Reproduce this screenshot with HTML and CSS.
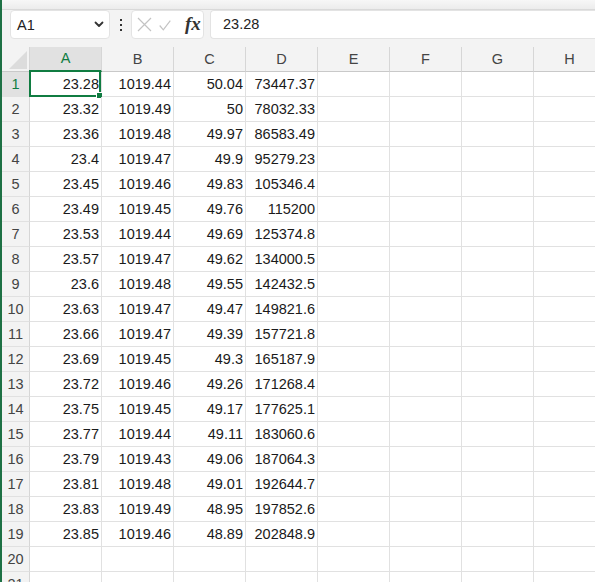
FILE: index.html
```html
<!DOCTYPE html>
<html>
<head>
<meta charset="utf-8">
<link rel="stylesheet" href="styles.css">
</head>
<body>
<div class="app">
  <div class="ribbon-edge"></div>
  <div class="fbar">
    <div class="namebox">
      <span class="name">A1</span>
      <svg class="chev" width="10" height="7" viewBox="0 0 10 7"><path d="M1.5 1.5 L5 5 L8.5 1.5" fill="none" stroke="#333" stroke-width="1.8" stroke-linecap="round" stroke-linejoin="round"/></svg>
    </div>
    <svg class="dots" width="4" height="14" viewBox="0 0 4 14"><rect x="1" y="1" width="2" height="2" fill="#333"/><rect x="1" y="6" width="2" height="2" fill="#333"/><rect x="1" y="11" width="2" height="2" fill="#333"/></svg>
    <div class="fxbox">
      <svg class="ico ix" width="15" height="15" viewBox="0 0 15 15"><path d="M1 1 L14 14 M14 1 L1 14" stroke="#c3c3c3" stroke-width="1.2" fill="none"/></svg>
      <svg class="ico ic" width="12" height="11" viewBox="0 0 12 11"><path d="M0.7 5.5 L4.3 9.8 L11.3 0.7" stroke="#c3c3c3" stroke-width="1.2" fill="none"/></svg>
      <span class="fx">fx</span>
    </div>
    <div class="input">23.28</div>
  </div>
  <div class="gap"></div>
  <div class="grid">
    <div class="corner"><svg width="27" height="24" viewBox="0 0 27 24"><polygon points="25,4 25,22 7,22" fill="#dcdcdc"/></svg></div>
    <div class="ch sel">A</div><div class="ch">B</div><div class="ch">C</div><div class="ch">D</div><div class="ch">E</div><div class="ch">F</div><div class="ch">G</div><div class="ch">H</div>

    <div class="rh sel">1</div><div class="c active">23.28<span class="selbox"><span class="handle"></span></span></div><div class="c">1019.44</div><div class="c">50.04</div><div class="c">73447.37</div><div class="c"></div><div class="c"></div><div class="c"></div><div class="c"></div>
    <div class="rh">2</div><div class="c">23.32</div><div class="c">1019.49</div><div class="c">50</div><div class="c">78032.33</div><div class="c"></div><div class="c"></div><div class="c"></div><div class="c"></div>
    <div class="rh">3</div><div class="c">23.36</div><div class="c">1019.48</div><div class="c">49.97</div><div class="c">86583.49</div><div class="c"></div><div class="c"></div><div class="c"></div><div class="c"></div>
    <div class="rh">4</div><div class="c">23.4</div><div class="c">1019.47</div><div class="c">49.9</div><div class="c">95279.23</div><div class="c"></div><div class="c"></div><div class="c"></div><div class="c"></div>
    <div class="rh">5</div><div class="c">23.45</div><div class="c">1019.46</div><div class="c">49.83</div><div class="c">105346.4</div><div class="c"></div><div class="c"></div><div class="c"></div><div class="c"></div>
    <div class="rh">6</div><div class="c">23.49</div><div class="c">1019.45</div><div class="c">49.76</div><div class="c">115200</div><div class="c"></div><div class="c"></div><div class="c"></div><div class="c"></div>
    <div class="rh">7</div><div class="c">23.53</div><div class="c">1019.44</div><div class="c">49.69</div><div class="c">125374.8</div><div class="c"></div><div class="c"></div><div class="c"></div><div class="c"></div>
    <div class="rh">8</div><div class="c">23.57</div><div class="c">1019.47</div><div class="c">49.62</div><div class="c">134000.5</div><div class="c"></div><div class="c"></div><div class="c"></div><div class="c"></div>
    <div class="rh">9</div><div class="c">23.6</div><div class="c">1019.48</div><div class="c">49.55</div><div class="c">142432.5</div><div class="c"></div><div class="c"></div><div class="c"></div><div class="c"></div>
    <div class="rh">10</div><div class="c">23.63</div><div class="c">1019.47</div><div class="c">49.47</div><div class="c">149821.6</div><div class="c"></div><div class="c"></div><div class="c"></div><div class="c"></div>
    <div class="rh">11</div><div class="c">23.66</div><div class="c">1019.47</div><div class="c">49.39</div><div class="c">157721.8</div><div class="c"></div><div class="c"></div><div class="c"></div><div class="c"></div>
    <div class="rh">12</div><div class="c">23.69</div><div class="c">1019.45</div><div class="c">49.3</div><div class="c">165187.9</div><div class="c"></div><div class="c"></div><div class="c"></div><div class="c"></div>
    <div class="rh">13</div><div class="c">23.72</div><div class="c">1019.46</div><div class="c">49.26</div><div class="c">171268.4</div><div class="c"></div><div class="c"></div><div class="c"></div><div class="c"></div>
    <div class="rh">14</div><div class="c">23.75</div><div class="c">1019.45</div><div class="c">49.17</div><div class="c">177625.1</div><div class="c"></div><div class="c"></div><div class="c"></div><div class="c"></div>
    <div class="rh">15</div><div class="c">23.77</div><div class="c">1019.44</div><div class="c">49.11</div><div class="c">183060.6</div><div class="c"></div><div class="c"></div><div class="c"></div><div class="c"></div>
    <div class="rh">16</div><div class="c">23.79</div><div class="c">1019.43</div><div class="c">49.06</div><div class="c">187064.3</div><div class="c"></div><div class="c"></div><div class="c"></div><div class="c"></div>
    <div class="rh">17</div><div class="c">23.81</div><div class="c">1019.48</div><div class="c">49.01</div><div class="c">192644.7</div><div class="c"></div><div class="c"></div><div class="c"></div><div class="c"></div>
    <div class="rh">18</div><div class="c">23.83</div><div class="c">1019.49</div><div class="c">48.95</div><div class="c">197852.6</div><div class="c"></div><div class="c"></div><div class="c"></div><div class="c"></div>
    <div class="rh">19</div><div class="c">23.85</div><div class="c">1019.46</div><div class="c">48.89</div><div class="c">202848.9</div><div class="c"></div><div class="c"></div><div class="c"></div><div class="c"></div>
    <div class="rh">20</div><div class="c"></div><div class="c"></div><div class="c"></div><div class="c"></div><div class="c"></div><div class="c"></div><div class="c"></div><div class="c"></div>
    <div class="rh">21</div><div class="c"></div><div class="c"></div><div class="c"></div><div class="c"></div><div class="c"></div><div class="c"></div><div class="c"></div><div class="c"></div>
  </div>
</div>
</body>
</html>
```

FILE: styles.css
```css
html, body {
  margin: 0;
  padding: 0;
  overflow: hidden;
  width: 595px;
  height: 582px;
  background: #fff;
}
body {
  font-family: "Liberation Sans", Arial, sans-serif;
  color: #222;
}
.app {
  border-left: 2px solid #1e7145;
  height: 582px;
  width: 604px;
  overflow: hidden;
}
.ribbon-edge {
  height: 9px;
  background: linear-gradient(#f7f7f7, #ececec);
  border-bottom: 1px solid #d9d9d9;
}
.fbar {
  display: flex;
  align-items: center;
  height: 29px;
  padding-left: 8px;
  background: #f3f3f3;
}
.namebox {
  box-sizing: border-box;
  width: 100px;
  height: 29px;
  background: #fff;
  border: 1px solid #e3e3e3;
  border-radius: 4px;
  display: flex;
  align-items: center;
  justify-content: space-between;
  padding: 0 5px 0 6px;
}
.name {
  font-size: 14.5px;
  color: #222;
}
.chev {
  display: block;
}
.dots {
  display: block;
  margin-left: 9px;
  margin-right: 8px;
}
.fxbox {
  box-sizing: border-box;
  width: 73px;
  height: 29px;
  background: #fff;
  border: 1px solid #e3e3e3;
  border-radius: 4px;
  display: flex;
  align-items: center;
  padding-left: 5px;
}
.ico {
  display: block;
}
.ix {
  margin-right: 7px;
}
.ic {
  margin-right: 14px;
  margin-top: 1px;
}
.fx {
  font-family: "Liberation Serif", "Times New Roman", serif;
  font-style: italic;
  font-weight: bold;
  font-size: 19px;
  color: #333;
  line-height: 1;
  margin-top: -2px;
}
.input {
  box-sizing: border-box;
  flex: 1;
  height: 29px;
  margin-left: 6px;
  background: #fff;
  border: 1px solid #e3e3e3;
  border-right: none;
  border-radius: 4px 0 0 4px;
  font-size: 14.5px;
  line-height: 27px;
  padding-left: 12px;
  color: #222;
}
.gap {
  height: 8px;
  background: #f3f3f3;
}
.grid {
  display: grid;
  grid-template-columns: 28px repeat(8, 72px);
  grid-auto-rows: 25px;
}
.corner, .ch, .rh, .c {
  box-sizing: border-box;
}
.corner {
  background: #f3f3f3;
  border-right: 1px solid #d6d6d6;
  border-bottom: 1px solid #c9c9c9;
}
.corner svg {
  display: block;
}
.ch {
  background: #f3f3f3;
  border-right: 1px solid #d6d6d6;
  border-bottom: 1px solid #c9c9c9;
  text-align: center;
  font-size: 14.5px;
  line-height: 24px;
  color: #444;
}
.ch.sel {
  background: #e1e1e1;
  color: #107c41;
  border-bottom: 2px solid #107c41;
  line-height: 23px;
}
.rh {
  background: #f3f3f3;
  border-right: 1px solid #d6d6d6;
  border-bottom: 1px solid #e1e1e1;
  text-align: center;
  font-size: 14.5px;
  line-height: 24px;
  color: #444;
}
.rh.sel {
  background: #e1e1e1;
  color: #107c41;
}
.c {
  position: relative;
  border-right: 1px solid #e1e1e1;
  border-bottom: 1px solid #e1e1e1;
  text-align: right;
  padding-right: 2px;
  font-size: 14.5px;
  line-height: 24px;
  color: #1a1a1a;
  white-space: nowrap;
}
.selbox {
  position: absolute;
  top: -2px;
  left: -1px;
  right: 0;
  bottom: -1px;
  border: 2px solid #107c41;
}
.handle {
  position: absolute;
  right: -4px;
  bottom: -4px;
  width: 5px;
  height: 5px;
  background: #107c41;
  border: 1px solid #fff;
}
```
